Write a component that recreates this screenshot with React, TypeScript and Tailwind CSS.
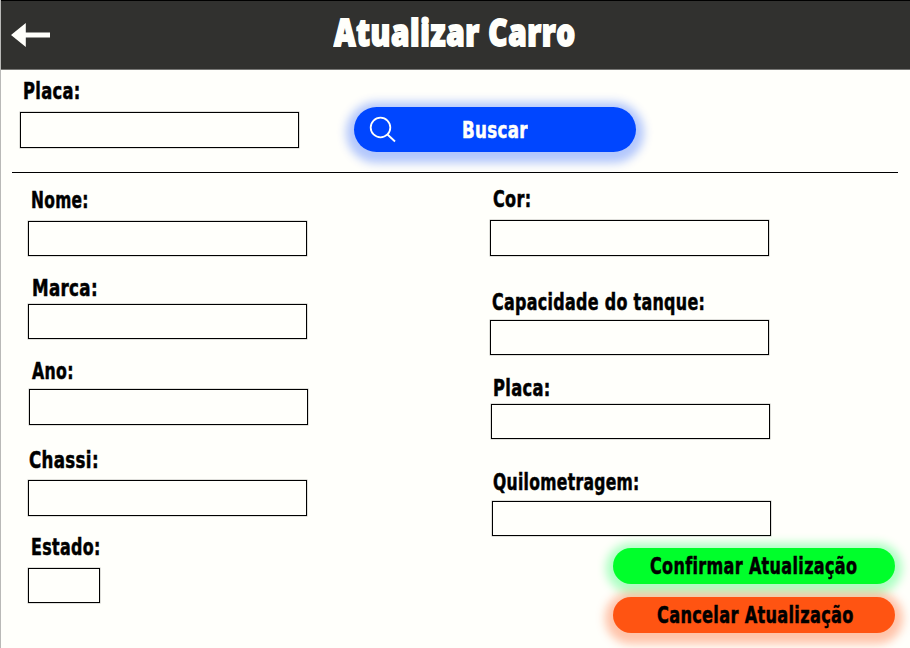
import { useLayoutEffect, useRef, useState } from "react";

type FitProps = { text: string; width: number; className?: string };

// Condenses a line of text horizontally to the given width.
function FitText({ text, width, className = "" }: FitProps) {
  const ref = useRef<HTMLSpanElement>(null);
  const [scale, setScale] = useState(1);
  useLayoutEffect(() => {
    if (ref.current) setScale(width / ref.current.offsetWidth);
  }, [text, width]);
  return (
    <span className="block" style={{ width }}>
      <span
        ref={ref}
        className={`inline-block origin-left whitespace-nowrap align-top ${className}`}
        style={{ transform: `scaleX(${scale})` }}
      >
        {text}
      </span>
    </span>
  );
}

const labelFont =
  "font-['DejaVu_Sans_Condensed','DejaVu_Sans',sans-serif] font-bold text-[22.5px] leading-6 tracking-[0.4px] [font-variant-ligatures:none] [-webkit-text-stroke:0.5px_currentColor]";

type FieldProps = {
  label: string;
  labelWidth: number;
  labelClass: string;
  inputClass: string;
  className?: string;
};

function Field({ label, labelWidth, labelClass, inputClass, className = "" }: FieldProps) {
  return (
    <label className={`block ${className}`}>
      <span className={`block h-6 text-black ${labelClass}`}>
        <FitText text={label} width={labelWidth} className={labelFont} />
      </span>
      <input
        aria-label={label}
        className={`block border border-black bg-transparent px-2 shadow-[0_0_0_0.5px_rgba(0,0,0,0.25)] outline-none ${inputClass}`}
      />
    </label>
  );
}

export default function App() {
  return (
    <div className="h-[648px] w-[910px] overflow-hidden border-l border-[#b9b9b7] bg-[#fffffb]">
      <header className="-ml-px flex h-[70px] border-t border-b border-t-black border-b-[#777775] bg-[#31312f] pl-[11px]">
        <button aria-label="Voltar" className="mt-[21px] h-[26px] w-10">
          <svg width="40" height="26" viewBox="0 0 40 26" fill="#fffffb">
            <path d="M0 13L14.8 1V10.6H39V15.6H14.8V25Z" />
          </svg>
        </button>
        <h1 className="mt-[9px] ml-[283px] text-[#fffffb]">
          <FitText
            text="Atualizar Carro"
            width={242}
            className="font-['Open_Sans',sans-serif] text-[37px] leading-[44px] font-extrabold tracking-[0.8px] [-webkit-text-stroke:1.8px_#fffffb]"
          />
        </h1>
      </header>

      <section className="ml-[11px] flex h-[103px] w-[886px] border-b border-black">
        <Field
          label="Placa:"
          labelWidth={58}
          labelClass="ml-[3px]"
          inputClass="mt-[9px] h-[36px] w-[279px]"
          className="mt-[9px] ml-[8px]"
        />
        <button className="mt-[37px] ml-[55px] flex h-[45px] w-[282px] rounded-full bg-[#0046ff] text-[#fffffb] shadow-[0_3px_10px_8px_rgba(0,70,255,0.3)]">
          <svg
            className="mt-[9px] ml-[15px]"
            width="28"
            height="28"
            viewBox="0 0 28 28"
            fill="none"
            stroke="#fffffb"
            strokeWidth="1.8"
          >
            <circle cx="11.5" cy="11.5" r="9.8" />
            <path d="M18.5 18.5L26 25.5" />
          </svg>
          <span className="mt-[11px] ml-[65px]">
            <FitText text="Buscar" width={66} className={labelFont} />
          </span>
        </button>
      </section>

      <main className="flex">
        <div className="ml-[27px] w-[462px] pt-[15px]">
          <Field label="Nome:" labelWidth={58} labelClass="ml-[3px]" inputClass="mt-[9px] h-[35px] w-[279px]" />
          <Field label="Marca:" labelWidth={66} labelClass="ml-[4px]" inputClass="mt-[4px] h-[35px] w-[279px]" className="mt-5" />
          <Field label="Ano:" labelWidth={42} labelClass="ml-[4px]" inputClass="mt-[6px] ml-px h-[36px] w-[279px]" className="mt-5" />
          <Field label="Chassi:" labelWidth={70} labelClass="ml-[1px]" inputClass="mt-[8px] h-[36px] w-[279px]" className="mt-[23px]" />
          <Field label="Estado:" labelWidth={70} labelClass="ml-[3px]" inputClass="mt-[9px] h-[35px] w-[72px]" className="mt-[19px]" />
        </div>

        <div className="w-[405px] pt-[14px]">
          <Field label="Cor:" labelWidth={38} labelClass="ml-[3px]" inputClass="mt-[9px] h-[36px] w-[279px]" />
          <Field label="Capacidade do tanque:" labelWidth={213} labelClass="ml-[2px]" inputClass="mt-[6px] h-[35px] w-[279px]" className="mt-[34px]" />
          <Field label="Placa:" labelWidth={58} labelClass="ml-[3px]" inputClass="mt-[4px] ml-px h-[35px] w-[279px]" className="mt-[21px]" />
          <Field label="Quilometragem:" labelWidth={147} labelClass="ml-[3px]" inputClass="mt-[7px] ml-[2px] h-[35px] w-[279px]" className="mt-[31px]" />
          <button className="mt-[12px] ml-[123px] flex h-[36px] w-[282px] rounded-full bg-[#00ff2b] pt-[6px] pl-[37px] text-left text-black shadow-[0_2px_10px_7px_rgba(0,255,80,0.33)]">
            <FitText text="Confirmar Atualização" width={207} className={labelFont} />
          </button>
          <button className="mt-[13px] ml-[123px] flex h-[36px] w-[282px] rounded-full bg-[#ff5412] pt-[6px] pl-[44px] text-left text-black shadow-[0_3px_10px_8px_rgba(255,84,18,0.35)]">
            <FitText text="Cancelar Atualização" width={197} className={labelFont} />
          </button>
        </div>
      </main>
    </div>
  );
}
